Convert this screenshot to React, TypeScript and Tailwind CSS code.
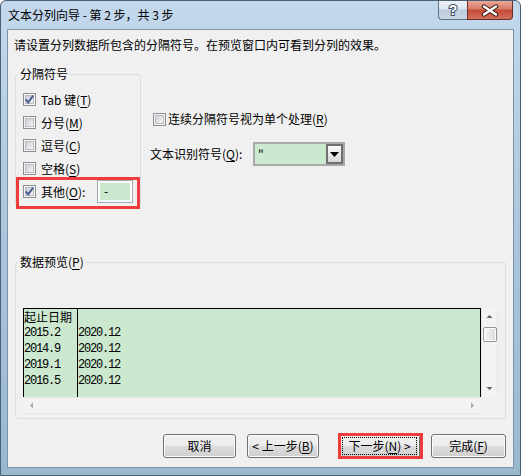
import React from "react";

const CheckBox = ({ checked = false }: { checked?: boolean }) => (
  <svg width="13" height="13" viewBox="0 0 13 13" className="shrink-0">
    <defs>
      <linearGradient id="cbInner" x1="0" y1="0" x2="1" y2="1">
        <stop offset="0" stopColor="#c9cdd3" />
        <stop offset="1" stopColor="#f7f7f8" />
      </linearGradient>
    </defs>
    <rect x="0.5" y="0.5" width="12" height="12" fill="#f6f6f6" stroke="#8e8f8f" />
    <rect x="2.5" y="2.5" width="8" height="8" fill="url(#cbInner)" stroke="#b9bdc3" />
    {checked && <path d="M2.6 6.4 L5.2 9.4 L10.2 2.6" fill="none" stroke="#4a5d93" strokeWidth="1.9" />}
  </svg>
);

const Arrow = ({ dir, color = "#5f5f5f" }: { dir: "up" | "down" | "left" | "right"; color?: string }) => {
  const d = {
    up: "M0.5 4 L3.5 1 L6.5 4 Z",
    down: "M0.5 1 L3.5 4 L6.5 1 Z",
    left: "M4 0.5 L1 3.5 L4 6.5 Z",
    right: "M1 0.5 L4 3.5 L1 6.5 Z",
  }[dir];
  const vertical = dir === "up" || dir === "down";
  return (
    <svg width={vertical ? 7 : 5} height={vertical ? 5 : 7} viewBox={vertical ? "0 0 7 5" : "0 0 5 7"}>
      <path d={d} fill={color} />
    </svg>
  );
};

const winButton =
  "h-[24px] border border-[#707070] rounded-[3px] bg-[linear-gradient(#f2f2f2,#ebebeb_50%,#dddddd_50%,#cfcfcf)] shadow-[inset_0_0_0_1px_#fbfbfb] flex items-center justify-center";

export default function App() {
  const rows = ["2015.2", "2014.9", "2019.1", "2016.5"];

  return (
    <div className="w-[521px] h-[476px] flex flex-col overflow-hidden rounded-t-[6px] border border-[#4a6175] bg-linear-to-b from-[#c3d8ed] via-[#abc6dc] to-[#99b8ce] text-[12px] leading-[16px] text-black font-['Noto_Sans_CJK_SC','Liberation_Sans',sans-serif]">
      {/* Title bar */}
      <div className="h-[28px] flex shrink-0">
        <div className="pl-[7px] flex items-center">文本分列向导 - 第 2 步，共 3 步</div>
        <div className="ml-auto mr-[7px] flex h-[19px]">
          <div className="w-[29px] h-[19px] border border-[#5f7389] border-t-0 border-r-0 rounded-bl-[4px] bg-[linear-gradient(#eef2f7,#dbe4ee_45%,#bccbdb_50%,#c9d7e5)] flex items-center justify-center">
            <svg width="14" height="16" viewBox="0 0 14 16">
              <text x="7" y="13" textAnchor="middle" fontSize="14" fontWeight="bold" fontFamily="Liberation Sans" fill="#ffffff" stroke="#3b4c60" strokeWidth="2" paintOrder="stroke">?</text>
            </svg>
          </div>
          <div className="w-[46px] h-[19px] border border-[#6b2d24] border-t-0 rounded-br-[4px] bg-[linear-gradient(#eaa897,#d77a66_45%,#c44a33_50%,#d2705b)] flex items-center justify-center">
            <svg width="20" height="13" viewBox="0 0 20 13">
              <path d="M4 2.5 L16 10.5 M16 2.5 L4 10.5" stroke="#3e1a14" strokeWidth="4.4" strokeLinecap="round" />
              <path d="M4 2.5 L16 10.5 M16 2.5 L4 10.5" stroke="#ffffff" strokeWidth="2.4" strokeLinecap="round" />
            </svg>
          </div>
        </div>
      </div>

      {/* Client area */}
      <div className="mx-[6px] h-[439px] shrink-0 border border-[#7f94a8] bg-[#f0f0f0] flex flex-col px-[7px] pt-[7px]">
        <div className="-ml-[1px]">请设置分列数据所包含的分隔符号。在预览窗口内可看到分列的效果。</div>

        <div className="flex mt-[13px]">
          {/* 分隔符号 */}
          <fieldset className="w-[126px] h-[141px] border border-[#d5dfe5] rounded-[3px]">
            <legend className="ml-[2px] px-[2px]">分隔符号</legend>
            <div className="pt-[6px] flex flex-col">
              <div className="h-[23px] flex items-center pl-[7px] gap-[5px]">
                <CheckBox checked />
                <span>Tab 键(<u className="underline-offset-2">T</u>)</span>
              </div>
              <div className="h-[23px] flex items-center pl-[7px] gap-[5px]">
                <CheckBox />
                <span>分号(<u className="underline-offset-2">M</u>)</span>
              </div>
              <div className="h-[23px] flex items-center pl-[7px] gap-[5px]">
                <CheckBox />
                <span>逗号(<u className="underline-offset-2">C</u>)</span>
              </div>
              <div className="h-[23px] flex items-center pl-[7px] gap-[5px]">
                <CheckBox />
                <span>空格(<u className="underline-offset-2">S</u>)</span>
              </div>
              <div className="relative h-[23px] flex items-center pl-[7px] gap-[5px]">
                <CheckBox checked />
                <span className="w-[56px]">其他(<u className="underline-offset-2">O</u>):</span>
                <div className="w-[36px] h-[23px] border border-[#a9abb0] bg-white p-[2px] -ml-[5px]">
                  <div className="h-full bg-[#cce8cf] pl-[4px] leading-[16px]">-</div>
                </div>
                <div className="absolute left-0 -top-[3px] w-[124px] h-[32px] border-[3px] border-[#ef3b3b]" />
              </div>
            </div>
          </fieldset>

          {/* right column */}
          <div className="ml-[9px] pt-[45px] flex flex-col">
            <div className="h-[16px] flex items-center pl-[3px] gap-[2px]">
              <CheckBox />
              <span>连续分隔符号视为单个处理(<u className="underline-offset-2">R</u>)</span>
            </div>
            <div className="mt-[15px] h-[24px] flex items-center">
              <span className="w-[103px]">文本识别符号(<u className="underline-offset-2">Q</u>):</span>
              <div className="w-[92px] h-[24px] border-2 border-[#a8a8a8] bg-[#cce8cf] flex">
                <span className="flex-1 pl-[3px] leading-[20px]">"</span>
                <div className="w-[17px] h-full border-2 border-[#707070] bg-linear-to-b from-[#fafafa] to-[#d8d8d8] flex items-center justify-center">
                  <svg width="9" height="5" viewBox="0 0 9 5">
                    <path d="M0 0 L9 0 L4.5 5 Z" fill="#000" />
                  </svg>
                </div>
              </div>
            </div>
          </div>
        </div>

        {/* 数据预览 */}
        <fieldset className="mt-[47px] w-[491px] h-[165px] border border-[#d5dfe5] rounded-[3px]">
          <legend className="ml-[2px] px-[2px]">数据预览(<u className="underline-offset-2">P</u>)</legend>
          <div className="pt-[38px] pl-[7px]">
            <div className="grid grid-cols-[458px_17px] grid-rows-[89px_17px]">
              <div className="border-t border-l border-r border-black bg-[#cce8cf] flex overflow-hidden">
                <div className="w-[54px] border-r border-black flex flex-col">
                  <div className="h-[16px] leading-[16px]">起止日期</div>
                  {rows.map((r) => (
                    <div key={r} className="h-[16px] leading-[16px] font-['Liberation_Mono',monospace] text-[12px] tracking-[-1.2px]">
                      {r}
                    </div>
                  ))}
                </div>
                <div className="flex-1 flex flex-col">
                  <div className="h-[16px]" />
                  {rows.map((r) => (
                    <div key={r} className="h-[16px] leading-[16px] font-['Liberation_Mono',monospace] text-[12px] tracking-[-1.2px]">
                      2020.12
                    </div>
                  ))}
                </div>
              </div>

              {/* vertical scrollbar */}
              <div className="bg-[#f3f3f3] border-x border-[#e6e6e6] flex flex-col items-center">
                <div className="h-[17px] flex items-center justify-center">
                  <Arrow dir="up" />
                </div>
                <div className="mt-[2px] w-[14px] h-[15px] border border-[#979797] rounded-[2px] bg-linear-to-r from-[#f4f4f4] to-[#d9d9d9] shadow-[inset_0_0_0_1px_#fdfdfd]" />
                <div className="flex-1" />
                <div className="h-[17px] flex items-center justify-center">
                  <Arrow dir="down" />
                </div>
              </div>

              {/* horizontal scrollbar */}
              <div className="bg-[#f3f3f3] border-y border-[#e6e6e6] flex items-center justify-between px-[6px]">
                <Arrow dir="left" color="#a6a6a6" />
                <Arrow dir="right" color="#a6a6a6" />
              </div>
              <div className="bg-[#f0f0f0]" />
            </div>
          </div>
        </fieldset>

        {/* buttons */}
        <div className="mt-[15px] flex justify-end">
          <button className={`${winButton} w-[73px]`}>取消</button>
          <button className={`${winButton} w-[72px] ml-[11px]`}>&lt;&nbsp;上一步(<u className="underline-offset-2">B</u>)</button>
          <div className="relative ml-[20px]">
            <button className={`${winButton} w-[81px] relative`}>
              下一步(<u className="underline-offset-2">N</u>)&nbsp;&gt;
              <span className="absolute inset-[2px] border border-dotted border-black" />
            </button>
            <div className="absolute -left-[1px] -top-[1px] w-[85px] h-[26px] border-[3px] border-[#ef3b3b]" />
          </div>
          <button className={`${winButton} w-[75px] ml-[11px]`}>完成(<u className="underline-offset-2">F</u>)</button>
        </div>
      </div>
    </div>
  );
}
